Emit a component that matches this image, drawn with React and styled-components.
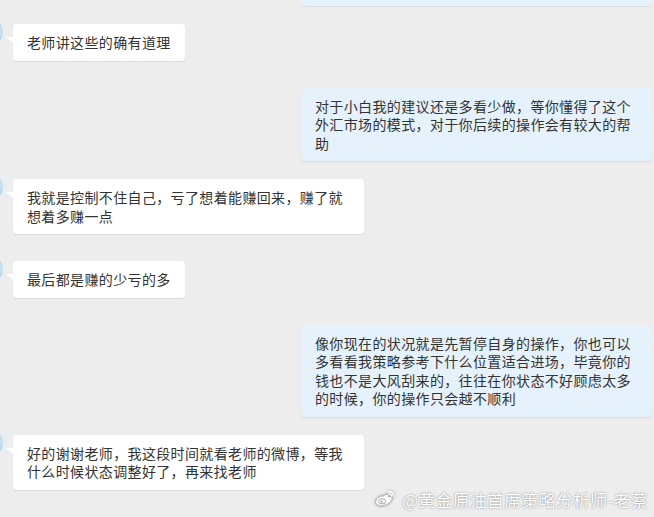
import React from 'react';
import styled, { createGlobalStyle } from 'styled-components';

const GlobalStyle = createGlobalStyle`
  html, body {
    margin: 0;
    padding: 0;
    background: #ededed;
  }
`;

const Screen = styled.div`
  position: relative;
  width: 654px;
  height: 517px;
  overflow: hidden;
  background: #ededed;
  font-family: "Noto Sans CJK SC", "Noto Sans", sans-serif;
`;

const Thread = styled.div`
  display: flex;
  flex-direction: column;
`;

const Row = styled.div`
  display: flex;
  align-items: flex-start;
  justify-content: ${props => (props.side === 'right' ? 'flex-end' : 'flex-start')};
  margin-top: ${props => props.gap}px;
  padding-right: ${props => (props.side === 'right' ? '2px' : '0')};
`;

const Avatar = styled.div`
  flex: none;
  width: 28px;
  height: 28px;
  margin: -6px 10px 0 -25px;
  border-radius: 50%;
  background: radial-gradient(circle at 80% 45%, #d6ebf8 0%, #8fc0e3 60%, #6aa6d6 100%);
`;

const Bubble = styled.div`
  position: relative;
  box-sizing: border-box;
  max-width: 351px;
  padding: 9px 14px;
  border-radius: 4px;
  background: ${props => (props.side === 'right' ? '#e5f1fb' : '#ffffff')};
  box-shadow: 0 1px 1px rgba(0, 0, 0, 0.08);
  color: #333333;
  font-size: 14px;
  letter-spacing: 0.36px;
  line-height: 18.5px;
  word-break: break-all;

  &:before {
    content: "";
    position: absolute;
    top: 13px;
    ${props => (props.side === 'right' ? 'right: -7px;' : 'left: -7px;')}
    border-top: 6px solid ${props => (props.side === 'right' ? '#e5f1fb' : '#ffffff')};
    ${props => (props.side === 'right'
      ? 'border-right: 7px solid transparent;'
      : 'border-left: 7px solid transparent;')}
  }
`;

/* bubbles that run past the top or bottom edge of the screen */
const EdgeBubble = styled(Bubble)`
  width: ${props => props.w}px;
  height: 36px;
  margin-top: ${props => (props.top ? '-30px' : '0')};
`;

const Watermark = styled.div`
  position: absolute;
  right: 6px;
  bottom: 6px;
  display: flex;
  align-items: center;
  gap: 5px;
  color: #ffffff;
  font-size: 17px;
  line-height: 22px;
  letter-spacing: 0.2px;
  text-shadow: 0 0 2px rgba(0, 0, 0, 0.36), 0 0 1px rgba(0, 0, 0, 0.22);
`;

const WeiboMark = () => (
  <svg width="24" height="22" viewBox="0 0 24 22" style={{ filter: 'drop-shadow(0 0 1.5px rgba(0,0,0,0.4))' }}>
    <path
      d="M10.2 7.2c2.3-1.9 4.6-2.3 5.3-1.2.3.5.2 1.3-.1 2 1.6-.5 3.1-.4 3.6.6.6 1.3-.6 3.6-3.1 5.4-2.6 1.9-6.1 3-8.6 2.7C4.7 16.4 2.6 15 2.6 12.9c0-1.9 2.4-4.5 4.7-5.7.9-.1 2-.1 2.9 0z"
      fill="#ffffff"
      stroke="#a8a8a8"
      strokeWidth="0.7"
    />
    <ellipse cx="9.2" cy="12.3" rx="3.6" ry="2.6" fill="none" stroke="#999999" strokeWidth="0.9" />
    <circle cx="8.7" cy="12.6" r="1.1" fill="#999999" />
    <path d="M15.5 2.6c2.6-.4 5 1.6 5.1 4.3" fill="none" stroke="#ffffff" strokeWidth="1.8" strokeLinecap="round" />
    <path d="M15.8 4.9c1.3-.2 2.5.8 2.6 2.1" fill="none" stroke="#ffffff" strokeWidth="1.5" strokeLinecap="round" />
  </svg>
);

const messages = [
  { side: 'left', gap: 18, text: '老师讲这些的确有道理' },
  { side: 'right', gap: 27, text: '对于小白我的建议还是多看少做，等你懂得了这个外汇市场的模式，对于你后续的操作会有较大的帮助' },
  { side: 'left', gap: 18, text: '我就是控制不住自己，亏了想着能赚回来，赚了就想着多赚一点' },
  { side: 'left', gap: 27, text: '最后都是赚的少亏的多' },
  { side: 'right', gap: 27, text: '像你现在的状况就是先暂停自身的操作，你也可以多看看我策略参考下什么位置适合进场，毕竟你的钱也不是大风刮来的，往往在你状态不好顾虑太多的时候，你的操作只会越不顺利' },
  { side: 'left', gap: 18, text: '好的谢谢老师，我这段时间就看老师的微博，等我什么时候状态调整好了，再来找老师' },
];

export default function App() {
  return (
    <>
      <GlobalStyle />
      <Screen>
        <Thread>
          <Row side="right" gap={0}>
            <EdgeBubble side="right" w={351} top />
          </Row>
          {messages.map((m, i) => (
            <Row key={i} side={m.side} gap={m.gap}>
              {m.side === 'left' && <Avatar />}
              <Bubble side={m.side}>{m.text}</Bubble>
            </Row>
          ))}
          <Row side="right" gap={25}>
            <EdgeBubble side="right" w={47} />
          </Row>
        </Thread>
        <Watermark>
          <WeiboMark />
          <span>@黄金原油首席策略分析师-老蔡</span>
        </Watermark>
      </Screen>
    </>
  );
}
